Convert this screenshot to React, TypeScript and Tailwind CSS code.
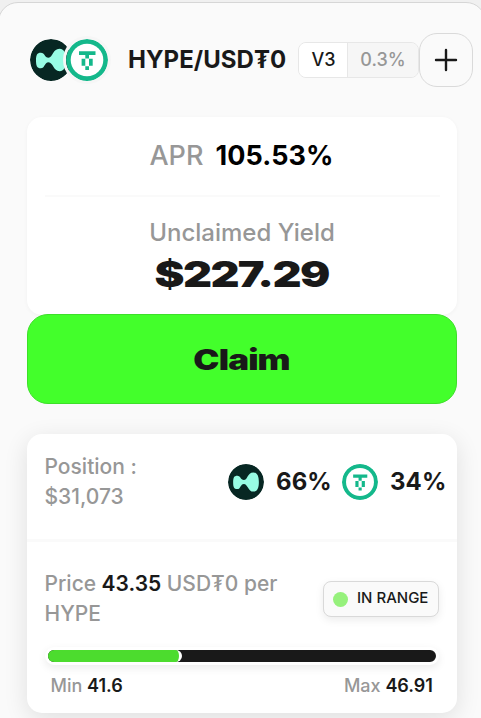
function HypeIcon({ size }: { size: number }) {
  return (
    <svg width={size} height={size} viewBox="0 0 42 42" className="block shrink-0 rounded-full">
      <circle cx="21" cy="21" r="21" fill="#072723" />
      <path
        d="M6 21.500C6 16 7 13.700 10.800 13.700C15 13.700 14.500 18.700 18.500 18.700C23 18.700 22.500 9.800 29.500 9.800C34.600 9.800 36 14.800 36 21C36 27.500 34.600 32.200 29.500 32.200C23.500 32.200 23 23.200 18.500 23.200C14.500 23.200 14.800 29.300 10.800 29.300C7 29.300 6 26.800 6 21.500Z"
        fill="#97fce4"
      />
    </svg>
  );
}

function UsdtIcon({ size }: { size: number }) {
  return (
    <svg width={size} height={size} viewBox="0 0 42 42" className="block shrink-0 rounded-full">
      <circle cx="21" cy="21" r="21" fill="#14b88b" />
      <circle cx="21" cy="21" r="16.3" fill="#fff" />
      <path
        d="M13 12.300H29.500V16H23V19.500H19.300V16H13ZM15.600 19.700H19.300V26.700H15.600ZM23 19.700H26.700V26.700H23ZM19.300 27.300H23V31H19.300Z"
        fill="#14b88b"
      />
    </svg>
  );
}

export default function App() {
  return (
    <div className="h-[718px] w-[481px] overflow-hidden bg-[#f0f0f0] pt-[2px] font-['Inter','Liberation_Sans',sans-serif] text-[#191919]">
      <main className="-ml-[2px] h-[760px] w-[488px] rounded-[20px] border border-[#d6d6d6] bg-[#fafafa] pl-[28px] pt-[30px]">
        <header className="flex h-[54px] items-center">
          <div className="ml-[3px] flex">
            <HypeIcon size={42} />
            <div className="relative -ml-[6px] rounded-full ring-3 ring-[#f6f6f6]">
              <UsdtIcon size={42} />
            </div>
          </div>
          <h1 className="ml-5 w-[170px] whitespace-nowrap text-[24px] font-[650] leading-[30px] tracking-[0.05px]">HYPE/USD₮0</h1>
          <div className="flex h-9 w-[121px] shrink-0 overflow-hidden rounded-[8px] border border-[#e7e7e7] text-[18px] font-medium leading-[34px]">
            <span className="w-[49px] border-r border-[#e7e7e7] bg-white pl-px text-center">V3</span>
            <span className="flex-1 bg-[#f6f6f6] text-center text-[#979797]">0.3%</span>
          </div>
          <button className="flex h-[54px] w-[54px] shrink-0 items-center justify-center rounded-[18px] border border-[#dadada]">
            <svg width="24" height="24" viewBox="0 0 24 24" fill="none" stroke="#191919" strokeWidth="2.400" strokeLinecap="round">
              <path d="M12 2V22M2 12H22" />
            </svg>
          </button>
        </header>

        <section className="mt-[30px] flex h-[198px] w-[430px] flex-col items-center rounded-[15px] bg-white shadow-[0_1px_4px_rgba(0,0,0,0.04)]">
          <div className="ml-px flex h-[80px] w-[395px] items-center justify-center gap-3 border-b-2 border-[#fafafa] pr-[2px] text-[27px] leading-9">
            <span className="font-medium text-[#979797]">APR</span>
            <span className="font-[650] tracking-[0.1px] text-black">105.53%</span>
          </div>
          <div className="mt-[21px] h-[30px] text-[24px] font-medium leading-[30px] text-[#979797]">Unclaimed Yield</div>
          <div className="mt-[5px] h-[42px] scale-x-[1.25] whitespace-nowrap text-[36px] font-black leading-[42px] tracking-[-1.3px]">$227.29</div>
        </section>

        <button className="-mt-px flex h-[90px] w-[430px] items-center justify-center rounded-[21px] border border-[#3ddf2a] bg-[#43ff2b]">
          <span className="inline-block scale-x-[1.25] pt-[2px] text-[28px] font-black leading-9 tracking-[-0.700px]">Claim</span>
        </button>

        <section className="mt-[30px] h-[279px] w-[430px] rounded-[15px] bg-white shadow-[0_6px_24px_rgba(0,0,0,0.11)]">
          <div className="flex h-[108px] justify-between border-b-3 border-[#fafafa] pl-[17.500px] pr-3">
            <div className="pt-[18px] text-[21px] font-medium leading-[30px] text-[#979797]">
              <p>Position :</p>
              <p>$31,073</p>
            </div>
            <div className="flex h-24 items-center text-[24px] font-[650] tracking-[0.1px]">
              <HypeIcon size={36} />
              <span className="ml-3 w-[66px] whitespace-nowrap">66%</span>
              <UsdtIcon size={36} />
              <span className="ml-3 w-[55px] whitespace-nowrap">34%</span>
            </div>
          </div>
          <div className="flex justify-between px-[18px] pt-[27px]">
            <div className="-ml-[0.500px] w-[260px] whitespace-nowrap text-[21px] font-medium leading-[30px] text-[#979797]">
              <p className="flex gap-[5.500px]">
                <span>Price</span>
                <span className="font-semibold text-[#191919]">43.35</span>
                <span>USD₮0 per</span>
              </p>
              <p>HYPE</p>
            </div>
            <div className="mt-3 flex h-9 w-[116px] shrink-0 items-center rounded-[8px] border border-[#d9d9d9] bg-[#fafafa] pl-[9px] shadow-[0_3px_9px_rgba(0,0,0,0.08)]">
              <i className="h-[15px] w-[15px] rounded-full bg-[#96f17c]" />
              <span className="ml-[9px] whitespace-nowrap pb-[2px] text-[15px] font-medium leading-5">IN RANGE</span>
            </div>
          </div>
          <div className="ml-[18px] mt-[18px] h-[18px] w-[394px] rounded-full border-3 border-white bg-[#191919] shadow-[0_3px_9px_rgba(0,0,0,0.08)]">
            <div className="box-content h-3 w-[131px] rounded-full border-r-3 border-white bg-[#4cdc2e]" />
          </div>
          <div className="flex justify-between pl-[23.500px] pr-6 pt-[9px] text-[18px] font-medium leading-6 text-[#979797]">
            <p>Min <span className="font-semibold text-[#191919]">41.6</span></p>
            <p>Max <span className="font-semibold text-[#191919]">46.91</span></p>
          </div>
        </section>
      </main>
    </div>
  );
}
